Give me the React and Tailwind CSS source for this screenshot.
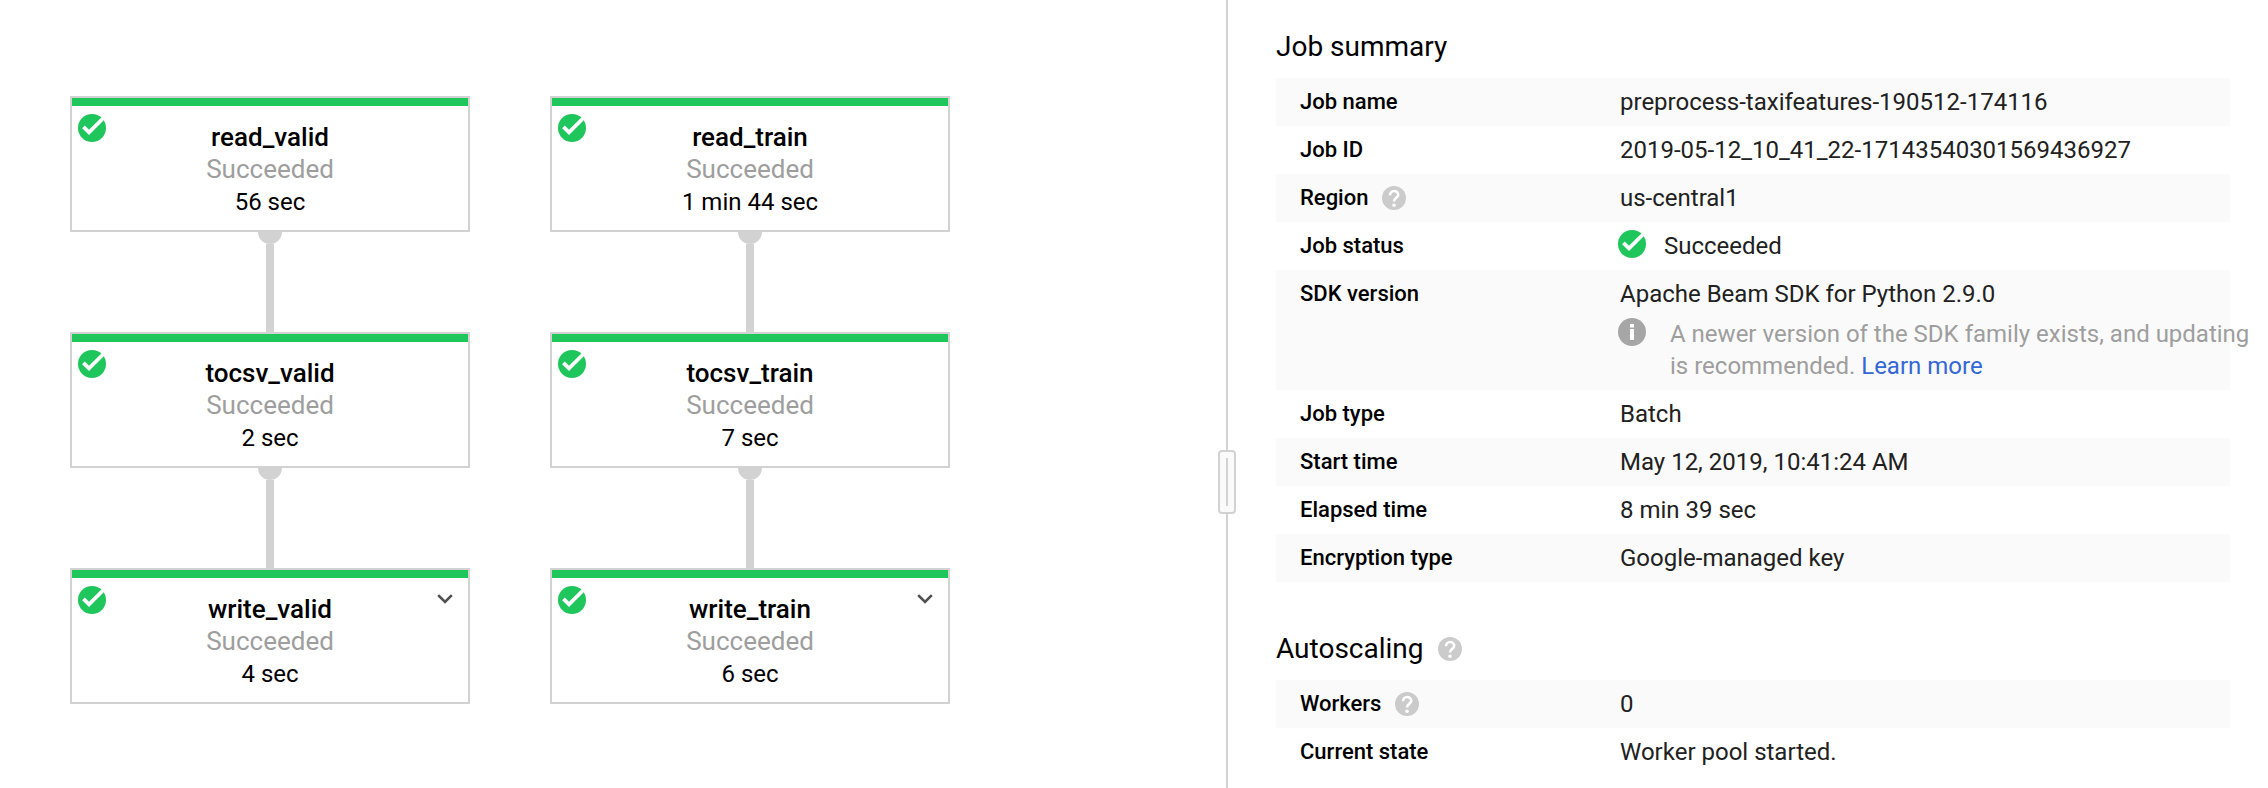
const pipelines = [
  [
    { name: "read_valid", time: "56 sec" },
    { name: "tocsv_valid", time: "2 sec" },
    { name: "write_valid", time: "4 sec", expandable: true },
  ],
  [
    { name: "read_train", time: "1 min 44 sec" },
    { name: "tocsv_train", time: "7 sec" },
    { name: "write_train", time: "6 sec", expandable: true },
  ],
];

function CheckIcon() {
  return (
    <svg viewBox="0 0 28 28" className="size-7 shrink-0" aria-hidden="true">
      <circle cx="14" cy="14" r="14" fill="#1fc65b" />
      <path d="M5.4 12.9 L11 18.4 L25.2 4.2" fill="none" stroke="#fff" strokeWidth="3.7" />
    </svg>
  );
}

function InfoIcon() {
  return (
    <svg viewBox="0 0 28 28" className="size-7 shrink-0" aria-hidden="true">
      <circle cx="14" cy="14" r="14" fill="#a6a6a6" />
      <path d="M12 6h4v3.4h-4zM12 11h4v11h-4z" fill="#fff" />
    </svg>
  );
}

function HelpButton({ label }) {
  return (
    <button type="button" aria-label={label} className="block size-6 shrink-0">
      <svg viewBox="0 0 24 24" className="size-6" aria-hidden="true">
        <circle cx="12" cy="12" r="12" fill="#cbcbcb" />
        <path d="M8 9.3 C8 3.6 16.2 3.8 16.2 8.8 C16.2 11.8 12 12 12 15.6" fill="none" stroke="#fff" strokeWidth="2.6" />
        <circle cx="12" cy="19.2" r="1.8" fill="#fff" />
      </svg>
    </button>
  );
}

function Step({ name, time, expandable }) {
  return (
    <article className="relative h-[136px] w-[400px] border-2 border-[#d2d2d2] bg-white">
      <div className="h-2 bg-[#1fc65b]" />
      <div className="absolute top-4 left-1.5">
        <CheckIcon />
      </div>
      {expandable && (
        <button type="button" aria-label={"Expand " + name} className="absolute top-6 right-[15px]">
          <svg viewBox="0 0 16 10" className="h-[10px] w-4" aria-hidden="true">
            <path d="M1.2 1.2 L8 8 L14.8 1.2" fill="none" stroke="#505050" strokeWidth="2.6" />
          </svg>
        </button>
      )}
      <div className="pt-[15px] text-center text-black">
        <h3 className="text-[26px] leading-8 font-medium">{name}</h3>
        <p className="text-[26px] leading-8 text-[#9e9e9e]">Succeeded</p>
        <p className="text-2xl leading-[34px]">{time}</p>
      </div>
    </article>
  );
}

function Connector() {
  return (
    <div className="flex h-[100px] flex-col items-center">
      <div className="h-3 w-6 rounded-b-full bg-[#d2d2d2]" />
      <div className="w-2 flex-1 bg-[#d2d2d2]" />
    </div>
  );
}

function Row({ label, help, children }) {
  return (
    <tr className="odd:bg-[#fafafa]">
      <th scope="row" className="w-[344px] py-2 pl-6 text-left align-top text-[22px] leading-8 font-medium text-black">
        <div className="flex items-center gap-3.5">
          {label}
          {help && <HelpButton label={"About " + label} />}
        </div>
      </th>
      <td className="py-2 align-top text-2xl leading-8 whitespace-nowrap text-[#212121]">{children}</td>
    </tr>
  );
}

export default function App() {
  return (
    <div className="flex h-screen overflow-hidden bg-white font-['Roboto',sans-serif] text-black">
      <main className="flex min-w-0 flex-1 gap-20 overflow-hidden pt-24 pl-[70px]">
        {pipelines.map((steps) => (
          <section key={steps[0].name}>
            {steps.map((step, i) => (
              <div key={step.name}>
                {i > 0 && <Connector />}
                <Step {...step} />
              </div>
            ))}
          </section>
        ))}
      </main>

      <div className="relative w-0.5 bg-[#d2d2d2]" role="separator" aria-orientation="vertical">
        <div className="absolute top-[450px] -left-2 flex h-16 w-[18px] justify-center rounded-sm border-2 border-[#d2d2d2] bg-[#fafafa] py-1.5">
          <div className="w-0.5 bg-[#d2d2d2]" />
        </div>
      </div>

      <aside className="w-[1040px] shrink-0 pt-[29px] pr-[38px] pl-12">
        <h2 className="pb-[13px] text-[28px] leading-9">Job summary</h2>
        <table className="w-full table-fixed border-collapse">
          <tbody>
            <Row label="Job name">preprocess-taxifeatures-190512-174116</Row>
            <Row label="Job ID">2019-05-12_10_41_22-17143540301569436927</Row>
            <Row label="Region" help>us-central1</Row>
            <Row label="Job status">
              <div className="-ml-0.5 flex items-start gap-[18px]">
                <CheckIcon />
                Succeeded
              </div>
            </Row>
            <Row label="SDK version">
              Apache Beam SDK for Python 2.9.0
              <div className="-ml-0.5 flex gap-6 pt-2">
                <InfoIcon />
                <p className="text-[#9e9e9e]">
                  A newer version of the SDK family exists, and updating
                  <br />
                  is recommended.{" "}
                  <a href="#learn-more" className="text-[#3367d6]">Learn more</a>
                </p>
              </div>
            </Row>
            <Row label="Job type">Batch</Row>
            <Row label="Start time">May 12, 2019, 10:41:24 AM</Row>
            <Row label="Elapsed time">8 min 39 sec</Row>
            <Row label="Encryption type">Google-managed key</Row>
          </tbody>
        </table>

        <div className="flex items-center gap-3.5 pt-[49px] pb-[13px]">
          <h2 className="text-[28px] leading-9">Autoscaling</h2>
          <HelpButton label="About autoscaling" />
        </div>
        <table className="w-full table-fixed border-collapse">
          <tbody>
            <Row label="Workers" help>0</Row>
            <Row label="Current state">Worker pool started.</Row>
          </tbody>
        </table>
      </aside>
    </div>
  );
}
